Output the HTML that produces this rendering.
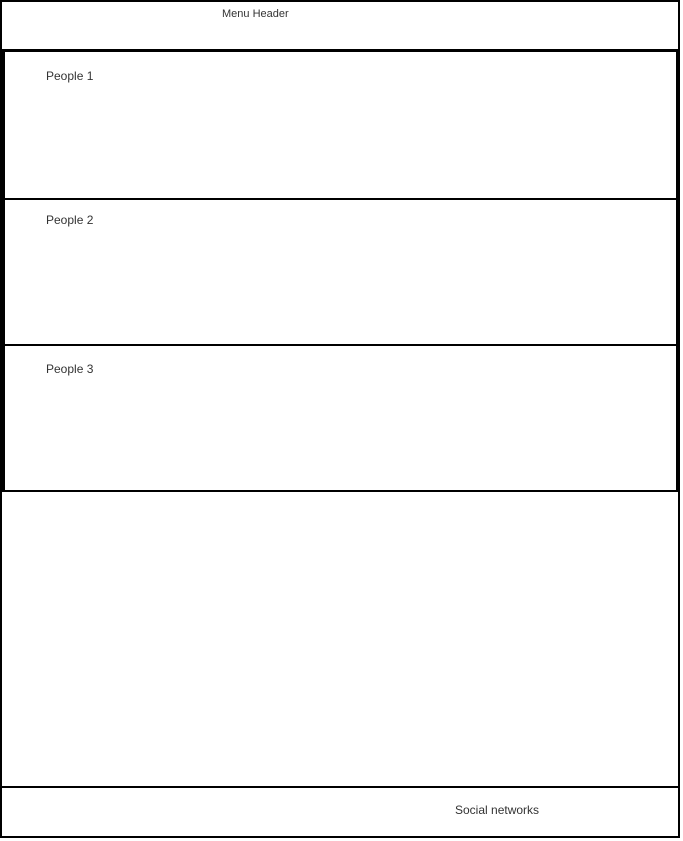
<!DOCTYPE html>
<html><head><style>
html,body{margin:0;padding:0;background:#fff;width:683px;height:841px;overflow:hidden;font-family:"Liberation Sans",Arial,sans-serif;color:#333}
.b{position:absolute;background:#000}
.t{position:absolute;font-size:12px;line-height:14px}
</style></head><body>
<!-- outer frame -->
<div class="b" style="left:0;top:0;width:680px;height:2px"></div>
<div class="b" style="left:0;top:0;width:2px;height:838px"></div>
<div class="b" style="left:678px;top:0;width:2px;height:838px"></div>
<div class="b" style="left:0;top:836px;width:680px;height:2px"></div>
<!-- header bottom -->
<div class="b" style="left:0;top:49px;width:680px;height:3px"></div>
<div class="t" style="left:222px;top:7px;font-size:11px">Menu Header</div>
<!-- people box -->
<div class="b" style="left:2px;top:51px;width:3px;height:441px"></div>
<div class="b" style="left:676px;top:51px;width:2px;height:441px"></div>
<div class="b" style="left:2px;top:198px;width:676px;height:2px"></div>
<div class="b" style="left:2px;top:344px;width:676px;height:2px"></div>
<div class="b" style="left:0;top:490px;width:680px;height:2px"></div>
<div class="t" style="left:46px;top:69px">People 1</div>
<div class="t" style="left:46px;top:213px">People 2</div>
<div class="t" style="left:46px;top:362px">People 3</div>
<!-- footer -->
<div class="b" style="left:0;top:786px;width:680px;height:2px"></div>
<div class="t" style="left:455px;top:803px">Social networks</div>
</body></html>
